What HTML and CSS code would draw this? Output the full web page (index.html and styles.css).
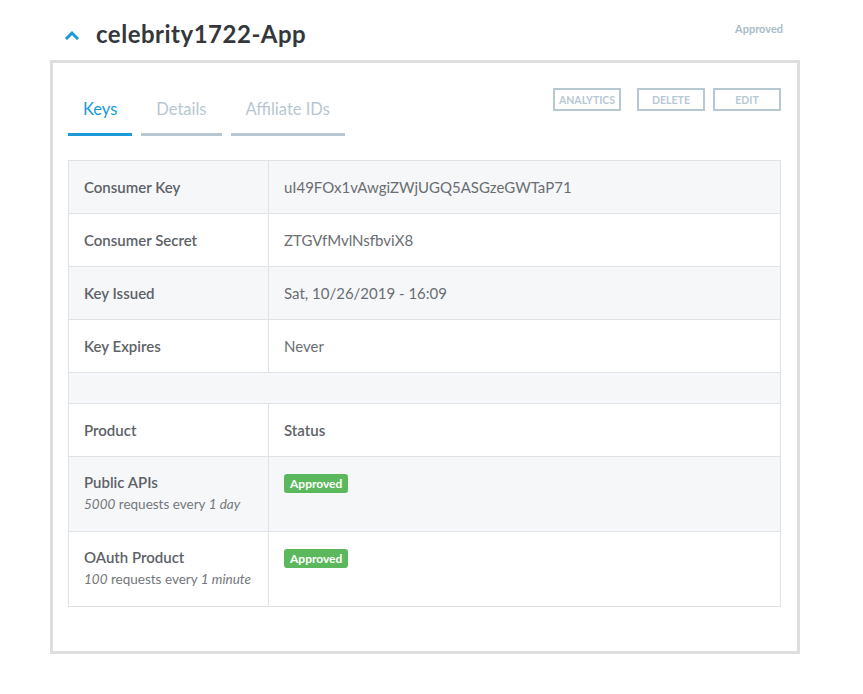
FILE: index.html
```html
<!DOCTYPE html>
<html>
<head>
<meta charset="utf-8">
<link rel="stylesheet" href="styles.css">
</head>
<body>
<div class="page">
  <div class="app-header">
    <div class="app-title">
      <svg class="chevron" width="14" height="10" viewBox="0 0 14 10"><path d="M2 8 L7 3 L12 8" fill="none" stroke="#1a9ad6" stroke-width="3" stroke-linecap="square"/></svg>
      <h1>celebrity1722-App</h1>
    </div>
    <div class="app-status">Approved</div>
  </div>
  <div class="box">
    <div class="toolbar">
      <div class="tabs">
        <div class="tab active">Keys</div>
        <div class="tab">Details</div>
        <div class="tab">Affiliate IDs</div>
      </div>
      <div class="actions">
        <div class="btn btn-analytics">ANALYTICS</div>
        <div class="btn btn-delete">DELETE</div>
        <div class="btn">EDIT</div>
      </div>
    </div>
    <table class="keys">
      <colgroup><col class="col-label"><col></colgroup>
      <tr class="odd"><th>Consumer Key</th><td>uI49FOx1vAwgiZWjUGQ5ASGzeGWTaP71</td></tr>
      <tr><th>Consumer Secret</th><td>ZTGVfMvlNsfbviX8</td></tr>
      <tr class="odd"><th>Key Issued</th><td>Sat, 10/26/2019 - 16:09</td></tr>
      <tr><th>Key Expires</th><td>Never</td></tr>
      <tr class="odd empty"><td colspan="2"></td></tr>
      <tr><th>Product</th><th>Status</th></tr>
      <tr class="odd prod"><th>Public APIs<div class="sub"><em>5000</em> requests every <em>1 day</em></div></th><td><span class="badge">Approved</span></td></tr>
      <tr class="prod"><th>OAuth Product<div class="sub"><em>100</em> requests every <em>1 minute</em></div></th><td><span class="badge">Approved</span></td></tr>
    </table>
  </div>
</div>
</body>
</html>
```

FILE: styles.css
```css
html, body {
  margin: 0;
  padding: 0;
  background: #fff;
  font-family: Lato, "Open Sans", sans-serif;
}
.page {
  width: 750px;
  margin-left: 50px;
  padding-top: 18px;
}
.app-header {
  display: flex;
  justify-content: space-between;
  align-items: flex-start;
  height: 42px;
}
.app-title {
  display: flex;
  align-items: center;
  padding-left: 15px;
}
.chevron {
  display: block;
  margin-right: 17px;
  margin-top: 2px;
}
h1 {
  margin: 0;
  font-size: 24px;
  line-height: 31px;
  font-weight: 700;
  color: #34373b;
  letter-spacing: 0.5px;
}
.app-status {
  font-size: 11px;
  font-weight: 700;
  color: #a9bcc8;
  padding-right: 17px;
  padding-top: 4px;
}
.box {
  border: 3px solid #dcdedf;
  padding: 24px 16px 44px 15px;
}
.toolbar {
  display: flex;
  justify-content: space-between;
  align-items: flex-start;
  margin-bottom: 24px;
}
.tabs {
  display: flex;
  gap: 9px;
  padding-top: 10px;
}
.tab {
  font-size: 16.5px;
  line-height: 24px;
  color: #b8c7d1;
  padding: 0 15px 12px 15px;
  border-bottom: 3px solid #b8c7d1;
}
.tab.active {
  color: #1a9ad6;
  border-bottom-color: #1a9ad6;
}
.actions {
  display: flex;
  padding-top: 1px;
}
.btn {
  box-sizing: border-box;
  width: 68px;
  height: 23px;
  border: 2px solid #b8c8d3;
  color: #b8c8d3;
  font-size: 10.5px;
  font-weight: 700;
  display: flex;
  align-items: center;
  justify-content: center;
}
.btn-analytics { margin-right: 16px; }
.btn-delete { margin-right: 8px; }
.keys {
  width: 100%;
  table-layout: fixed;
  border-collapse: collapse;
  border: 1px solid #dfe2e6;
}
.col-label { width: 200px; }
.keys th, .keys td {
  border: 1px solid #dfe2e6;
  text-align: left;
  vertical-align: top;
  padding: 16px 15px;
  font-size: 15px;
  line-height: 20px;
}
.keys th {
  font-weight: 600;
  color: #5d6268;
}
.keys td {
  font-weight: 400;
  color: #6a6e72;
}
.keys tr.odd th, .keys tr.odd td {
  background: #f6f7f9;
}
.keys tr.empty td {
  padding: 0;
  height: 30px;
}
.keys tr.prod th, .keys tr.prod td {
  padding-top: 15px;
  padding-bottom: 16px;
}
.sub {
  margin-top: 2px;
  font-size: 13.5px;
  line-height: 21px;
  font-weight: 400;
  color: #73777b;
}
.sub em {
  font-style: italic;
}
.badge {
  display: inline-block;
  background: #5cb85c;
  color: #fff;
  font-size: 12px;
  font-weight: 700;
  line-height: 19px;
  padding: 0 6px;
  border-radius: 3px;
  margin-top: 1px;
}
```
